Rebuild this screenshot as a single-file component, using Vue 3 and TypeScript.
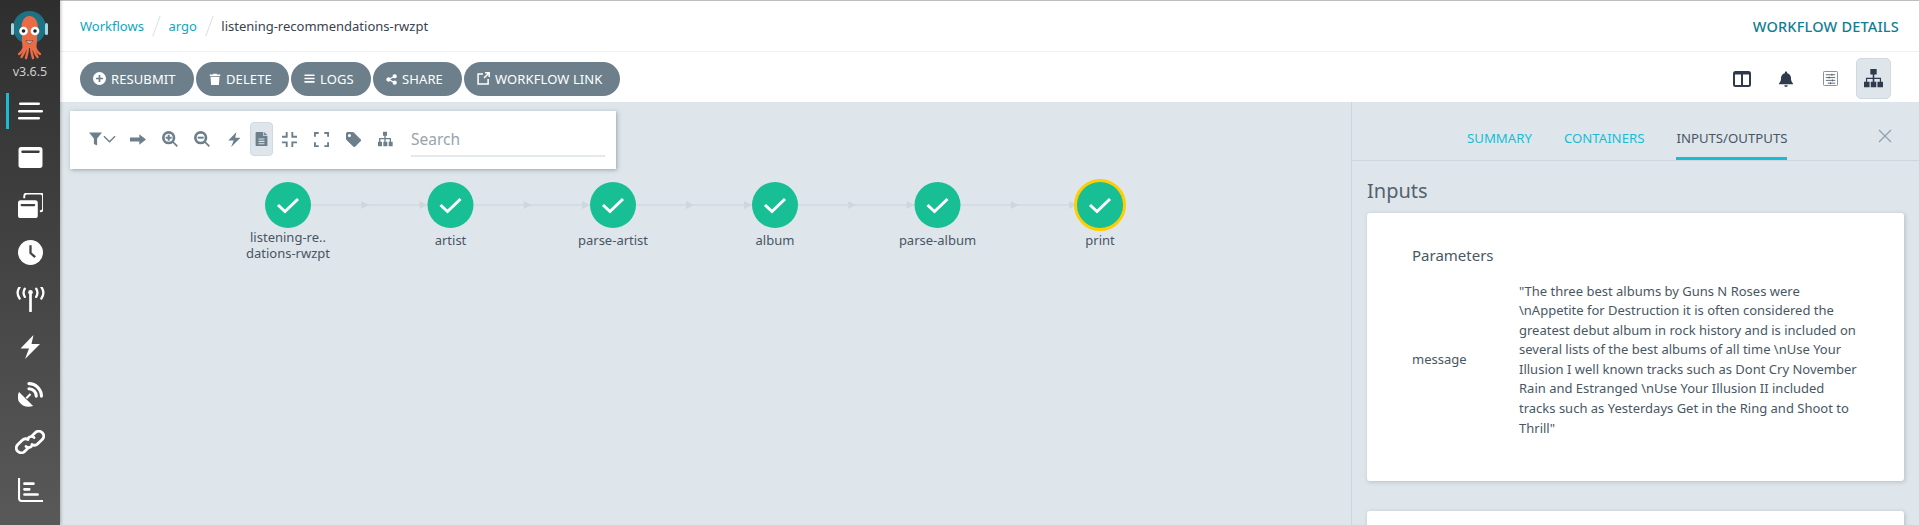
<script setup lang="ts">
const P = {
  win: 'M3 2h18a2.5 2.5 0 0 1 2.5 2.5v15a2.5 2.5 0 0 1-2.5 2.5H3a2.5 2.5 0 0 1-2.5-2.5v-15A2.5 2.5 0 0 1 3 2zm1 3.2a.8.8 0 0 0-.8.8v.8a.8.8 0 0 0 .8.8h16a.8.8 0 0 0 .8-.8V6a.8.8 0 0 0-.8-.8z',
  bolt: 'M14.5 0 1.5 13.5H10L6 24l15-15h-8.5z',
  plus: 'M12 0a12 12 0 1 0 0 24 12 12 0 0 0 0-24zm1.6 5.5v4.9h4.9v3.2h-4.9v4.9h-3.2v-4.9H5.5v-3.2h4.9V5.5z',
  trash: 'M1.5 3.2H8L8.6 1.5h6.8L16 3.2h6.5V6h-21zM3 7.5h18L19.8 24H4.2z',
  bars: 'M1 3h22v3.4H1zM1 10.3h22v3.4H1zM1 17.6h22V21H1z',
  share: 'M19 15.5c-1.3 0-2.4.5-3.2 1.4l-6-3c.1-.6.1-1.2 0-1.8l6-3c.8.9 1.9 1.4 3.2 1.4a4.5 4.5 0 1 0-4.4-3.6l-6 3a4.5 4.5 0 1 0 0 6.2l6 3A4.5 4.5 0 1 0 19 15.5z',
  doc: 'M14 0v7h7v15a2 2 0 0 1-2 2H3a2 2 0 0 1-2-2V2a2 2 0 0 1 2-2zm1.5 0L21 5.5h-5.5zM6 11v2h10v-2zm0 4v2h10v-2zm0 4v2h10v-2z',
  tag: 'M0 2.5A2.5 2.5 0 0 1 2.500 0h8.300c.7 0 1.300.3 1.800.7l10.700 10.700a2.500 2.500 0 0 1 0 3.500l-8.300 8.300a2.500 2.500 0 0 1-3.500 0L.8 12.600A2.500 2.500 0 0 1 0 10.800zM5.500 3a2.500 2.500 0 1 0 0 5 2.500 2.500 0 0 0 0-5z',
  tree: 'M9 1h6v6h-2v3.500h8V16h2.500v7h-6v-7H19v-3.500h-6V16h2.500v7h-6v-7H11v-3.500H5V16h2.500v7h-6v-7H3v-5.500h8V7H9z',
}
const sideIcons = ['bars', 'win', 'clone', 'clock', 'radio', 'bolt', 'dish', 'link', 'chart']
const nodes = [
  { x: 228, lines: ['listening-re..', 'dations-rwzpt'] },
  { x: 390.500, lines: ['artist'] },
  { x: 553, lines: ['parse-artist'] },
  { x: 715, lines: ['album'] },
  { x: 877.500, lines: ['parse-album'] },
  { x: 1040, lines: ['print'], selected: true },
]
const edges = nodes.slice(1).map((n, i) => ({ from: nodes[i].x, to: n.x }))
const message = '"The three best albums by Guns N Roses were \\nAppetite for Destruction it is often considered the greatest debut album in rock history and is included on several lists of the best albums of all time \\nUse Your Illusion I well known tracks such as Dont Cry November Rain and Estranged \\nUse Your Illusion II included tracks such as Yesterdays Get in the Ring and Shoot to Thrill"'
</script>

<template>
  <div class="app">
    <aside class="side">
      <svg class="logo" viewBox="0 0 60 62" width="60" height="62">
        <circle cx="29.500" cy="27.500" r="16.500" fill="#1d7283" />
        <rect x="11" y="23" width="3" height="12" rx="1.500" fill="#a9d4e4" />
        <rect x="45" y="23" width="3" height="12" rx="1.500" fill="#a9d4e4" />
        <g fill="none" stroke="#ea6c47" stroke-width="2.400" stroke-linecap="round">
          <path d="M24 46c-1 5-3 7-5 8M26 47c-1 5-3 8-4.500 10M28 47c0 4-1 8-2 11M31 47c0 4 1 8 2 11M33 47c1 5 3 8 4.500 10M35 46c1 5 3 7 5 8" />
        </g>
        <path d="M21.500 28c0-8 3.500-12 8-12s8.500 4 8.500 12c0 5-1 7-1 11 0 5-.5 9-2 9H24c-1.500 0-2-4-2-9 0-4-.5-6-.5-11z" fill="#ea6c47" />
        <circle cx="23.500" cy="31" r="4.300" fill="#fff" /><circle cx="35" cy="31" r="4.300" fill="#fff" />
        <circle cx="23.500" cy="31" r="1.800" fill="#222" /><circle cx="35" cy="31" r="1.800" fill="#222" />
        <path d="M26 40.500c2 1 4.500 1 6.500 0-.8 3.500-5.700 3.500-6.500 0z" fill="#fff" stroke="#222" stroke-width=".6" />
      </svg>
      <div class="ver">v3.6.5</div>
      <nav class="nav">
        <div class="active-bar"></div>
        <div v-for="n in sideIcons" :key="n" class="nav-item">
          <svg v-if="n === 'bars'" viewBox="0 0 25 18" width="25" height="18" fill="#fff"><rect x="1" y="0.500" width="21" height="2.600" rx="1.300" /><rect x="0" y="8" width="25" height="2.600" rx="1.300" /><rect x="0" y="15" width="22" height="2.600" rx="1.300" /></svg>
          <svg v-else-if="n === 'win'" viewBox="0 0 24 24" width="25" height="25" fill="#fff"><path :d="P.win" fill-rule="evenodd" /></svg>
          <svg v-else-if="n === 'clone'" viewBox="0 0 24 24" width="25" height="25" fill="#fff"><path d="M2.500 7h14A2.500 2.500 0 0 1 19 9.500v12a2.500 2.500 0 0 1-2.500 2.500h-14A2.500 2.500 0 0 1 0 21.500v-12A2.500 2.500 0 0 1 2.500 7zm1 3.500a.8.8 0 0 0 0 2.200h12a.8.8 0 0 0 0-2.200z" fill-rule="evenodd" /><path d="M6 5V3a2.500 2.500 0 0 1 2.500-2.500h13A2.500 2.500 0 0 1 24 3v12a2.500 2.500 0 0 1-2.500 2.500H21" fill="none" stroke="#fff" stroke-width="1.800" /></svg>
          <svg v-else-if="n === 'clock'" viewBox="0 0 24 24" width="25" height="25"><circle cx="12" cy="12" r="12" fill="#fff" /><path d="M12 5v7.500l4.500 4" fill="none" stroke="#454545" stroke-width="2.200" /></svg>
          <svg v-else-if="n === 'radio'" viewBox="0 0 28 24" width="29" height="25" fill="none" stroke="#fff" stroke-width="2.200" stroke-linecap="round"><path d="M14 6v17" stroke-width="2.600" /><circle cx="14" cy="5" r="2.200" fill="#fff" stroke="none" /><path d="M8.500 1.500C7 4 7 7 8.500 9.500M19.500 1.500C21 4 21 7 19.500 9.500M3.500 0C1 3.500 1 7.500 3.500 11M24.500 0C27 3.500 27 7.500 24.500 11" /></svg>
          <svg v-else-if="n === 'bolt'" viewBox="1 0 20 24" width="20" height="24" fill="#fff"><path :d="P.bolt" /></svg>
          <svg v-else-if="n === 'dish'" viewBox="0 0 24 24" width="25" height="25"><path d="M1 9.500 14.500 23C9 25 3.500 23 1 19 -.5 16-.5 12 1 9.500z" fill="#fff" /><path d="M8 15.500 12 11.500" stroke="#fff" stroke-width="2" /><path d="M10.500 6.500c4 0 7 3 7 7M10.500 1.500c6.500 0 12 5.500 12 12" fill="none" stroke="#fff" stroke-width="3" stroke-linecap="round" /></svg>
          <svg v-else-if="n === 'link'" viewBox="0 0 30 24" width="30" height="24" fill="none" stroke="#fff" stroke-width="2.800" stroke-linecap="round"><path d="M13 9.500c-1.800-1-4-.8-5.500.6l-4.700 4.400c-2 2-2 4.800-.1 6.800 2 2 4.900 2 6.900.1l3.500-3.300" /><path d="M17 14.500c1.800 1 4 .8 5.500-.6l4.700-4.400c2-2 2-4.800.1-6.800-2-2-4.900-2-6.900-.1l-3.500 3.300" /><path d="M11 16.500c1.500 1.300 4 1.300 5.500-.2M19 7.500c-1.500-1.300-4-1.300-5.500.2" /></svg>
          <svg v-else viewBox="0 0 24 24" width="25" height="25" fill="#fff"><path d="M0 1h2v19.500A1.500 1.500 0 0 0 3.500 22H24v2H3.500A3.500 3.500 0 0 1 0 20.500z" /><rect x="5" y="5" width="11" height="2.600" rx="1" /><rect x="5" y="10.500" width="7" height="2.600" rx="1" /><rect x="5" y="15.500" width="15" height="2.600" rx="1" /></svg>
        </div>
      </nav>
    </aside>

    <main class="main">
      <header class="top">
        <div class="crumbs">
          <a class="link">Workflows</a><i class="sl"></i><a class="link">argo</a><i class="sl"></i><span>listening-recommendations-rwzpt</span>
        </div>
        <div class="title">WORKFLOW DETAILS</div>
      </header>

      <div class="bar">
        <div class="btns">
          <button class="b w114"><svg viewBox="0 0 24 24" width="13" height="13" fill="#fff"><path :d="P.plus" fill-rule="evenodd" /></svg>RESUBMIT</button>
          <button class="b w93"><svg viewBox="0 0 24 24" width="12" height="14" fill="#fff"><path :d="P.trash" /></svg>DELETE</button>
          <button class="b w80"><svg viewBox="0 0 24 24" width="11" height="13" fill="#fff"><path :d="P.bars" /></svg>LOGS</button>
          <button class="b w89"><svg viewBox="0 0 24 24" width="11" height="12" fill="#fff"><path :d="P.share" /></svg>SHARE</button>
          <button class="b w156"><svg viewBox="0 0 24 24" width="13" height="13" fill="none" stroke="#fff" stroke-width="2.800"><path d="M11 3.500H2v18.500h18.500v-9M13 11 22 2M15 1.500h7.500V9" /></svg>WORKFLOW LINK</button>
        </div>
        <div class="views">
          <div class="v"><svg viewBox="0 0 18 16" width="18" height="16" fill="none" stroke="#2f3a4c"><rect x="1" y="1" width="16" height="14" rx="1.500" stroke-width="2" /><path d="M9 1v14" stroke-width="2" /><path d="M1 2.500h16" stroke-width="2" /></svg></div>
          <div class="v"><svg viewBox="0 0 24 26" width="14" height="16" fill="#2f3a4c"><path d="M12 0c1.300 0 2 .8 2 2v1c4 .8 6.500 4 6.500 8 0 5 1 7 3.500 9.500V22H0v-1.500C2.500 18 3.500 16 3.500 11c0-4 2.500-7.200 6.500-8V2c0-1.200.7-2 2-2zM9 23.500h6a3 3 0 0 1-6 0z" /></svg></div>
          <div class="v"><svg viewBox="0 0 16 16" width="15" height="15" fill="none" stroke="#4a5563"><rect x=".5" y=".5" width="15" height="15" rx="1" stroke="#7f8891" /><path d="M3 4h10M3 7h10M3 10h10M5 13h8" stroke-width=".9" /><path d="M9.500 3v2M6.500 6v2M10 9v2M8 12v2" stroke-width="1" /></svg></div>
          <div class="v on"><svg viewBox="0 0 24 24" width="19" height="19" fill="#2f3a4c"><path d="M8 0h8v7h-3v4h8.500v5H24v7h-7v-7h3v-3.500h-7V16h2.500v7h-7v-7H11v-3.500H4V16h3v7H0v-7h2.500v-5H11V7H8z" /></svg></div>
        </div>
      </div>

      <div class="content">
        <section class="graph">
          <div class="tools">
            <span class="tool filter"><svg viewBox="0 0 24 24" width="13" height="14" fill="#6d7f8b"><path d="M0 0h24L15 11v13l-6-3V11z" /></svg><svg viewBox="0 0 14 8" width="13" height="8" fill="none" stroke="#6d7f8b" stroke-width="1.500"><path d="M1 1l6 6 6-6" /></svg></span>
            <span class="tool"><svg viewBox="0 0 24 16" width="16" height="11" fill="#6d7f8b"><path d="M0 5h14V0l10 8-10 8v-5H0z" /></svg></span>
            <span class="tool"><svg viewBox="0 0 24 24" width="16" height="16"><circle cx="10" cy="10" r="8" fill="none" stroke="#6d7f8b" stroke-width="4" /><path d="M10 5.500v9M5.500 10h9" stroke="#6d7f8b" stroke-width="3" /><path d="M15.500 15.500 23 23" stroke="#6d7f8b" stroke-width="2.500" /></svg></span>
            <span class="tool"><svg viewBox="0 0 24 24" width="16" height="16"><circle cx="10" cy="10" r="8" fill="none" stroke="#6d7f8b" stroke-width="4" /><path d="M5.500 10h9" stroke="#6d7f8b" stroke-width="3" /><path d="M15.500 15.500 23 23" stroke="#6d7f8b" stroke-width="2.500" /></svg></span>
            <span class="tool"><svg viewBox="1 0 20 24" width="12.500" height="15" fill="#6d7f8b"><path :d="P.bolt" /></svg></span>
            <span class="tool on"><svg viewBox="0 0 22 24" width="13" height="16" fill="#6d7f8b"><path :d="P.doc" fill-rule="evenodd" /></svg></span>
            <span class="tool"><svg viewBox="0 0 16 16" width="15" height="15" fill="none" stroke="#6d7f8b" stroke-width="2"><path d="M5 0v5H0M11 0v5h5M5 16v-5H0M11 16v-5h5" /></svg></span>
            <span class="tool"><svg viewBox="0 0 16 16" width="15" height="15" fill="none" stroke="#6d7f8b" stroke-width="2"><path d="M1 5V1h4M15 5V1h-4M1 11v4h4M15 11v4h-4" /></svg></span>
            <span class="tool"><svg viewBox="0 0 24 24" width="15" height="15" fill="#6d7f8b"><path :d="P.tag" fill-rule="evenodd" /></svg></span>
            <span class="tool"><svg viewBox="0 0 24 24" width="18" height="16" fill="#6d7f8b"><path :d="P.tree" /></svg></span>
            <div class="search">Search</div>
          </div>

          <svg class="canvas" width="1291" height="423" viewBox="0 0 1291 423">
            <g v-for="e in edges" :key="e.from">
              <path :d="`M${e.from + 23} 103H${e.to - 23}`" stroke="#d3dde3" stroke-width="2" />
              <path :d="`M${(e.from + e.to) / 2 - 8} 99l8 4-8 4z`" fill="#cdd8de" />
              <path :d="`M${e.to - 31} 99l8 4-8 4z`" fill="#cdd8de" />
            </g>
            <g v-for="n in nodes" :key="n.x">
              <circle v-if="n.selected" :cx="n.x" cy="103" r="24.500" fill="#18be94" stroke="#ffcd00" stroke-width="3" />
              <circle v-else :cx="n.x" cy="103" r="23" fill="#18be94" />
              <path :d="`M${n.x - 10} ${103}l7 6.500 13-12.500`" fill="none" stroke="#fff" stroke-width="3" />
              <text v-for="(l, i) in n.lines" :key="l" class="lbl" :x="n.x" :y="n.lines.length > 1 ? 140 + i * 16 : 143">{{ l }}</text>
            </g>
          </svg>
        </section>

        <section class="panel">
          <div class="tabs">
            <a class="tab">SUMMARY</a>
            <a class="tab">CONTAINERS</a>
            <a class="tab cur">INPUTS/OUTPUTS</a>
            <svg class="close" viewBox="0 0 14 14" width="14" height="14" fill="none" stroke="#8fa3ae" stroke-width="1.300"><path d="M1 1l12 12M13 1 1 13" /></svg>
          </div>
          <div class="body">
            <h3 class="h">Inputs</h3>
            <div class="card">
              <div class="params">Parameters</div>
              <div class="row">
                <div class="k">message</div>
                <div class="val">{{ message }}</div>
              </div>
            </div>
            <div class="card next"></div>
          </div>
        </section>
      </div>
    </main>
  </div>
</template>

<style>
html, body { margin: 0; overflow: hidden; }
</style>

<style scoped>
.app { display: flex; width: 1919px; height: 525px; overflow: hidden; font-family: "Noto Sans", sans-serif; color: #495763; background: #dee6eb; }
.side { width: 60px; flex: none; background: linear-gradient(to bottom, #2e2e2e, #595959); display: flex; flex-direction: column; align-items: center; box-shadow: 1px 0 3px rgba(0,0,0,.25); z-index: 2; }
.logo { display: block; flex: none; }
.ver { font-size: 12.500px; line-height: 18px; color: #cfcfcf; margin-top: 1px; }
.nav { position: relative; width: 60px; margin-top: 6px; }
.nav-item { height: 47.300px; display: flex; align-items: center; justify-content: center; }
.active-bar { position: absolute; left: 6px; top: 6px; width: 3px; height: 36px; background: #18bdd4; }
.main { flex: 1; display: flex; flex-direction: column; min-width: 0; }
.top { height: 50px; box-sizing: content-box; border-top: 1px solid #bdbdbd; border-bottom: 1px solid #eef1f3; background: #fff; display: flex; align-items: center; justify-content: space-between; padding: 0 20px; }
.crumbs { display: flex; align-items: center; font-size: 13px; color: #39424e; }
.link { color: #12a5bd; }
.sl { display: inline-block; width: 1px; height: 22px; background: #d9dee2; transform: rotate(20deg); margin: 0 11.500px 0 12px; }
.title { font-size: 14.500px; font-weight: 500; color: #0f7d95; letter-spacing: .2px; }
.bar { height: 50px; box-sizing: border-box; background: #fff; display: flex; align-items: center; justify-content: space-between; padding: 3px 28px 0 20px; }
.btns { display: flex; gap: 2px; }
.b { height: 34px; border: 0; border-radius: 17px; background: #6d7f8b; color: #fff; font: 400 13px "Noto Sans", sans-serif; letter-spacing: .1px; display: inline-flex; align-items: center; gap: 5px; padding: 0 0 0 13px; }
.w114 { width: 114px; } .w93 { width: 93px; } .w80 { width: 80px; } .w89 { width: 89px; } .w156 { width: 156px; }
.views { display: flex; align-items: center; }
.v { width: 44px; height: 41px; display: flex; align-items: center; justify-content: center; box-sizing: border-box; }
.v.on { width: 35px; margin-left: 4px; background: #dee6eb; border: 1px solid #cfd9df; border-radius: 5px; }
.content { flex: 1; display: flex; min-height: 0; }
.graph { position: relative; flex: 1; min-width: 0; }
.canvas { display: block; }
.tools { position: absolute; left: 10px; top: 9px; width: 546px; height: 58px; box-sizing: border-box; background: #fff; box-shadow: 1px 1px 4px rgba(80,100,115,.5); display: flex; align-items: center; padding: 0 0 2px 12px; z-index: 1; }
.tool { width: 32px; height: 34px; display: flex; align-items: center; justify-content: center; flex: none; box-sizing: border-box; }
.tool.filter { width: 40px; gap: 1px; }
.tool.on { width: 23px; background: #dee6eb; border: 1px solid #d0dae1; border-radius: 4px; }
.search { margin-left: 10px; width: 194px; height: 36px; padding-top: 1px; border-bottom: 2px solid #e4e9ec; font-size: 15.500px; line-height: 35px; color: #9aa3ac; box-sizing: border-box; }
.lbl { font-size: 13px; fill: #4a5563; text-anchor: middle; }
.panel { width: 568px; flex: none; border-left: 1px solid #ccd6dd; box-sizing: border-box; }
.tabs { position: relative; height: 58px; border-bottom: 1px solid #ccd6dd; display: flex; align-items: flex-end; padding-left: 115px; gap: 32px; box-sizing: content-box; }
.tab { font-size: 13.200px; height: 38px; line-height: 32px; color: #18bdd4; box-sizing: border-box; }
.tab.cur { color: #4a5563; border-bottom: 3px solid #18bdd4; }
.close { position: absolute; right: 27px; top: 27px; }
.body { padding: 16px 15px 0 15px; }
.h { margin: 0 0 8px; font-weight: 400; font-size: 20px; line-height: 28px; color: #55626e; }
.card { background: #fff; border-radius: 3px; box-shadow: 1px 1px 4px rgba(80,100,115,.3); height: 268px; padding: 32px 45px; box-sizing: border-box; }
.card.next { margin-top: 30px; height: 60px; }
.params { font-size: 15px; line-height: 20px; color: #495763; }
.row { display: flex; align-items: center; margin-top: 16.500px; font-size: 13px; line-height: 19.600px; color: #495763; }
.k { width: 107px; flex: none; }
.val { width: 345px; }
</style>
